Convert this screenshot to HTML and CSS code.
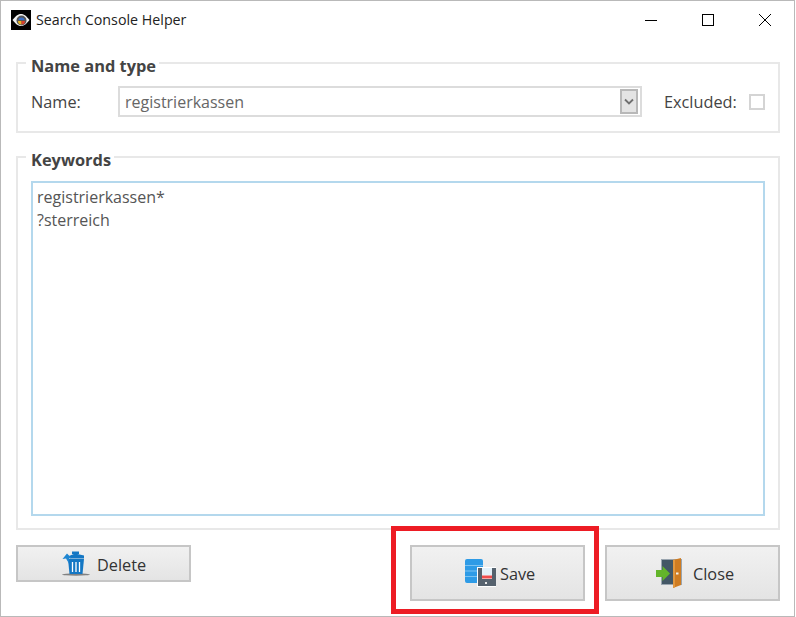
FILE: index.html
```html
<!DOCTYPE html>
<html lang="en">
<head>
<meta charset="utf-8">
<title>Search Console Helper</title>
<link rel="stylesheet" href="styles.css">
</head>
<body>
<div class="window">
  <header class="titlebar">
    <svg class="app-icon" width="20" height="20" viewBox="0 0 20 20">
      <rect width="20" height="20" fill="#000"/>
      <path d="M1.500 10C5 5.500 7.500 4 10 4S15 5.500 18.500 10C15 14.500 12.500 16 10 16S5 14.500 1.500 10Z" fill="#f2f2f2"/>
      <circle cx="10.500" cy="10.500" r="5" fill="#555"/>
      <path d="M7 11a3.500 3.500 0 0 0 3.500 3.500V11Z" fill="#e8b520"/>
      <path d="M14 11a3.500 3.500 0 0 1-3.500 3.500V11Z" fill="#d8402c"/>
      <path d="M7.500 10a3 2.500 0 0 1 6 0Z" fill="#3a6fc8"/>
    </svg>
    <span class="title">Search Console Helper</span>
    <div class="caption">
      <svg class="cap" width="14" height="14" viewBox="0 0 14 14"><path d="M1 7.500H13" stroke="#000" fill="none"/></svg>
      <svg class="cap" width="14" height="14" viewBox="0 0 14 14"><rect x="1.500" y="1.500" width="11" height="11" stroke="#000" fill="none"/></svg>
      <svg class="cap" width="14" height="14" viewBox="0 0 14 14"><path d="M1 1L13 13M13 1L1 13" stroke="#000" fill="none"/></svg>
    </div>
  </header>

  <main class="content">
    <section class="group group-name">
      <h2 class="legend">Name and type</h2>
      <div class="name-row">
        <label class="name-label">Name:</label>
        <div class="combo">
          <span class="combo-value">registrierkassen</span>
          <span class="combo-arrow">
            <svg width="10" height="7" viewBox="0 0 10 7"><path d="M1 1.500L5 5.500L9 1.500" stroke="#707070" stroke-width="1.800" fill="none"/></svg>
          </span>
        </div>
        <label class="excluded-label">Excluded:</label>
        <span class="checkbox"></span>
      </div>
    </section>

    <section class="group group-keywords">
      <h2 class="legend">Keywords</h2>
      <div class="keywords">registrierkassen*<br>?sterreich</div>
    </section>

    <div class="actions">
      <button class="btn btn-delete">
        <svg width="28" height="25" viewBox="0 0 28 25">
          <ellipse cx="14" cy="23.500" rx="14" ry="1.200" fill="#555" opacity=".7"/>
          <path d="M6 8H22L20.500 23H7.500Z" fill="#1477c4"/>
          <path d="M10.500 11V21M14 11V21M17.500 11V21" stroke="#fff" stroke-width="1.300"/>
          <path d="M7 5L13 2.500L22 4.500V7.500H8Z" fill="#1477c4"/>
          <path d="M10 .5H17V3H10Z" fill="#1477c4"/>
          <path d="M.5 8L5 2.500L9.500 7L7 7.500L7 12.500L4 7.500Z" fill="#1e86d2"/>
        </svg>
        <span>Delete</span>
      </button>
      <button class="btn btn-save">
        <svg width="31" height="28" viewBox="0 0 31 28">
          <path d="M0 2Q0 0 2 0H16Q18 0 18 2V22Q18 24 16 24H2Q0 24 0 22Z" fill="#2e9be6"/>
          <path d="M0 6.500H18M0 12H18M0 17.500H18" stroke="#7cc3f2" stroke-width="1.200"/>
          <path d="M12 8H31V28H12Z" fill="#fff"/>
          <path d="M13 9H17V27H13ZM27 9H31V27H27ZM17 20H27V27H17Z" fill="#56626e"/>
          <path d="M17 9H27V16.500H17Z" fill="#e3f1fa"/>
          <path d="M17 16.500H27V19.500H17Z" fill="#ee4d4d"/>
          <rect x="20" y="23" width="2" height="2" fill="#e8e8e8"/>
        </svg>
        <span>Save</span>
      </button>
      <button class="btn btn-close">
        <svg width="26" height="30" viewBox="0 0 26 30">
          <path d="M5 1H26V27H5Z" fill="#9aa5af"/>
          <path d="M6 2H17V26H6Z" fill="#435766"/>
          <path d="M17 2L25 0V27L17 30Z" fill="#cf7c22"/>
          <path d="M17 2L19 1.500V29.300L17 30Z" fill="#e2973e"/>
          <rect x="20" y="14.500" width="2.500" height="2" fill="#f4f0e8"/>
          <path d="M0 12H6.500V8L14 15.500L6.500 23V19H0Z" fill="#63b52a"/>
        </svg>
        <span>Close</span>
      </button>
    </div>
  </main>
  <div class="highlight"></div>
</div>
</body>
</html>
```
FILE: styles.css
```css
* { box-sizing: border-box; }
html, body { margin: 0; padding: 0; background: #fff; }
body {
  width: 796px;
  height: 617px;
  overflow: hidden;
  font-family: "Open Sans", "Noto Sans", sans-serif;
  font-size: 16.300px;
  color: #444;
}
.window {
  position: relative;
  width: 795px;
  height: 617px;
  border: 1px solid #b9b9b9;
  background: #fff;
  display: flex;
  flex-direction: column;
}
.titlebar {
  height: 38px;
  flex: none;
  display: flex;
  align-items: center;
  padding-left: 10px;
}
.app-icon { flex: none; }
.title {
  margin-left: 5px;
  margin-bottom: 2px;
  font-size: 14.250px;
  color: #222;
}
.caption {
  margin-left: auto;
  margin-right: 22px;
  display: flex;
  gap: 43px;
  align-items: center;
}
.cap { display: block; }
.content {
  flex: 1;
  display: flex;
  flex-direction: column;
  padding: 23px 14px 0 15px;
}
.group {
  border: 2px solid #e8e8e8;
}
.legend {
  width: fit-content;
  margin: -8px 0 0 8px;
  padding: 0 3px 0 5px;
  background: #fff;
  font-weight: 700;
  font-size: 16.400px;
  line-height: 20px;
  color: #444;
}
.group-name { height: 71px; }
.name-row {
  display: flex;
  align-items: center;
  height: 31px;
  margin-top: 10px;
  padding-left: 13px;
}
.name-label { width: 87px; flex: none; }
.combo {
  width: 524px;
  height: 31px;
  flex: none;
  border: 2px solid #dcdcdc;
  display: flex;
  align-items: center;
  justify-content: space-between;
  padding-left: 5px;
  padding-right: 2px;
  font-size: 16px;
  color: #666;
}
.combo-arrow {
  width: 18px;
  height: 25px;
  border: 2px solid #b8b8b8;
  background: #e4e4e4;
  display: flex;
  align-items: center;
  justify-content: center;
}
.excluded-label { margin-left: 22px; width: 85px; flex: none; }
.checkbox {
  width: 16px;
  height: 16px;
  flex: none;
  border: 2px solid #d4d4d4;
  background: #fff;
}
.group-keywords {
  height: 374px;
  margin-top: 23px;
  padding: 0 13px;
}
.group-keywords .legend { margin-left: -5px; }
.keywords {
  height: 335px;
  margin-top: 11px;
  border: 2px solid #b4d8ed;
  padding: 3px 4px;
  line-height: 23px;
  font-size: 16px;
  color: #555;
}
.actions {
  display: flex;
  margin-top: 15px;
  align-items: flex-start;
}
.btn {
  width: 175px;
  display: flex;
  align-items: center;
  border: 2px solid #c6c6c6;
  background: linear-gradient(#f1f1f1, #e4e4e4);
  font-family: "Open Sans", sans-serif;
  font-size: 16.300px;
  color: #333;
}
.btn svg { flex: none; }
.btn span { padding-top: 2px; }
.btn-delete { height: 37px; padding: 0 0 0 44px; gap: 7px; }
.btn-save { height: 56px; margin-left: 219px; padding: 0 0 0 53px; gap: 4px; }
.btn-close { height: 56px; margin-left: 20px; padding: 0 0 0 49px; gap: 11px; }
.highlight {
  position: absolute;
  left: 390px;
  top: 525px;
  width: 208px;
  height: 88px;
  border: 5px solid #ed1c24;
  pointer-events: none;
}
```
